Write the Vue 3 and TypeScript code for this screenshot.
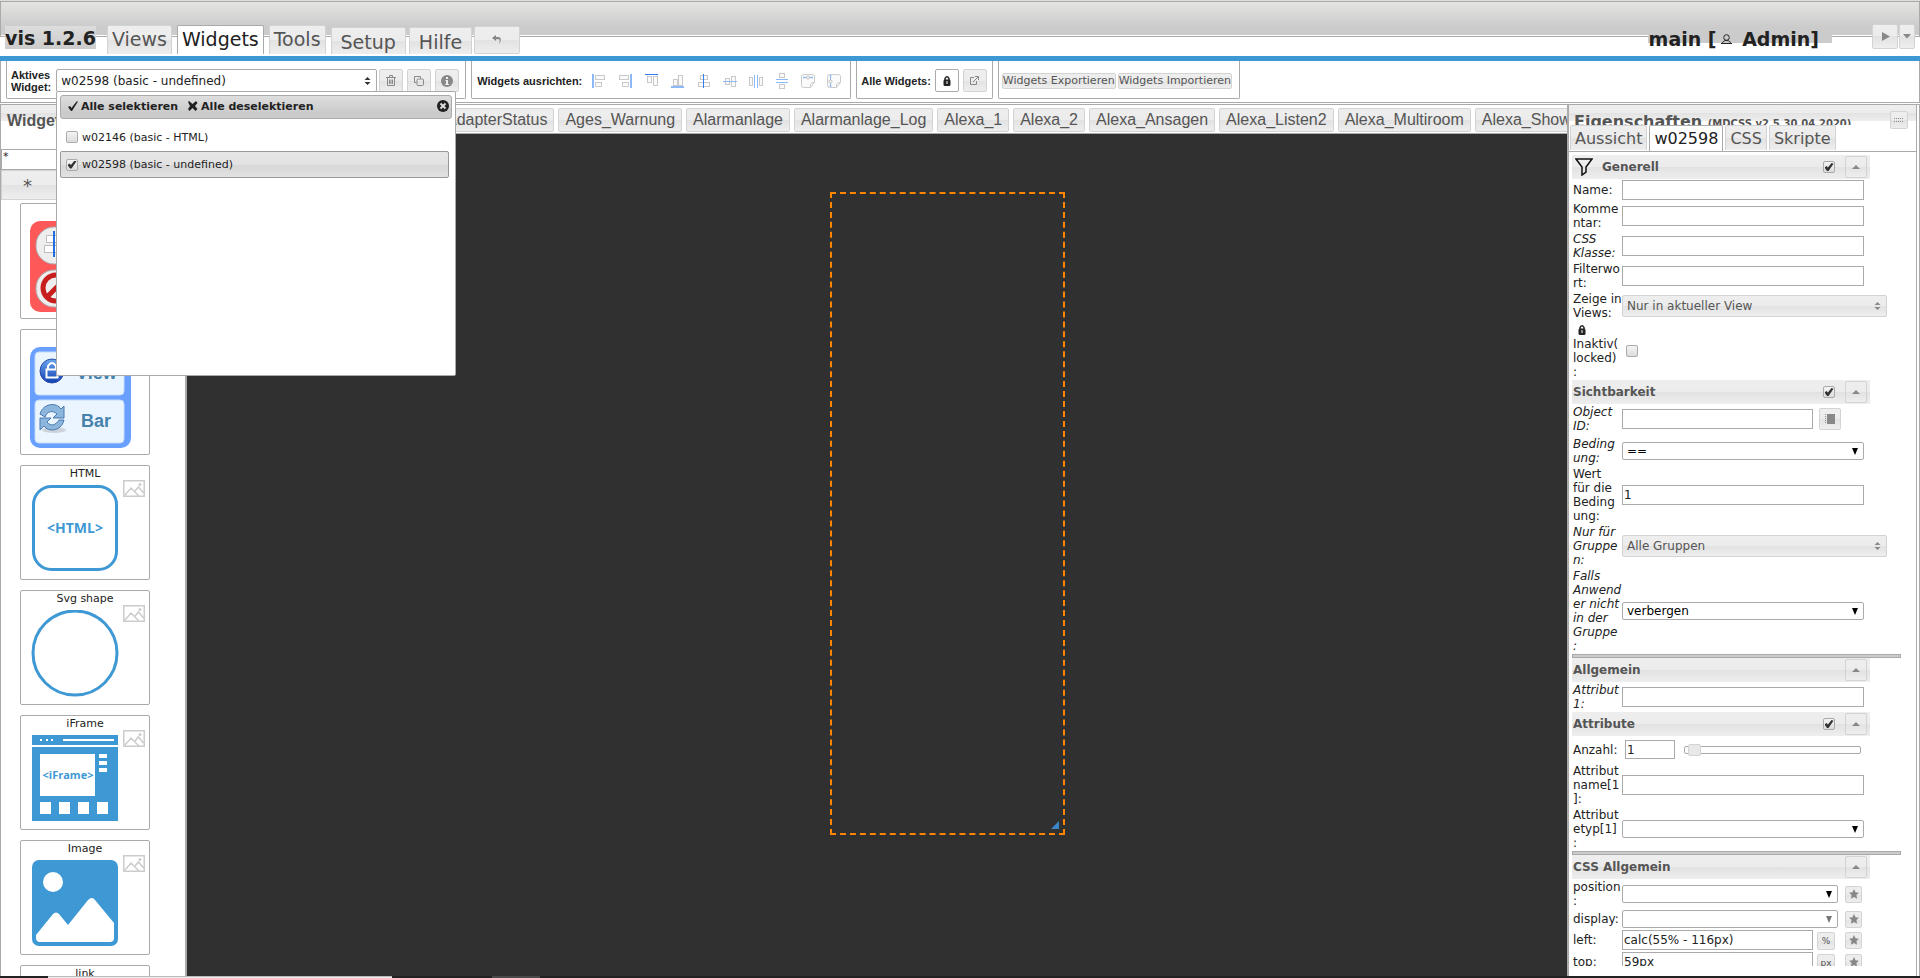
<script setup lang="ts">
import { ref } from 'vue'

interface Tab { label: string; kind: 'view' | 'plain'; active?: boolean }
type Box = [number, number, number, number, string]
interface AlignIcon { name: string; boxes: Box[] }
interface Field {
  id: string
  label: string
  type: 'text' | 'views' | 'check' | 'object' | 'select' | 'slider' | 'cssSelect' | 'cssText'
  lines: number
  italic?: boolean
  value?: string
  unit?: string
  faded?: boolean
}
interface Section { title: string; filter?: boolean; check?: boolean; divider?: boolean; fields: Field[] }

const tabs: Tab[] = [
  { label: 'Views', kind: 'view' },
  { label: 'Widgets', kind: 'view', active: true },
  { label: 'Tools', kind: 'view' },
  { label: 'Setup', kind: 'plain' },
  { label: 'Hilfe', kind: 'plain' },
]

const b = '#8ab9f7'
const d = '#2f7fee'
const g = 'none'
const alignIcons: AlignIcon[] = [
  { name: 'Links', boxes: [[0, 1, 2, 14, b], [3.5, 2.5, 9, 4, g], [3.5, 9.5, 6, 4, g]] },
  { name: 'Rechts', boxes: [[12, 1, 2, 14, b], [1.5, 2.5, 9, 4, g], [4.5, 9.5, 6, 4, g]] },
  { name: 'Oben', boxes: [[1, 1, 13, 1, d], [3.5, 3.5, 4, 6, g], [9.5, 3.5, 4, 9, g]] },
  { name: 'Unten', boxes: [[1, 13, 13, 2, b], [3.5, 6.5, 4, 6, g], [8.5, 2.5, 4, 10, g]] },
  { name: 'Mitte vertikal', boxes: [[4.5, 2.5, 7, 4, g], [2.5, 9.5, 11, 4, g], [7, 1, 1, 14, d]] },
  { name: 'Mitte horizontal', boxes: [[3.5, 5.5, 4, 6, g], [9.5, 3.5, 4, 10, g], [1, 8, 14, 1, b]] },
  { name: 'Breite verteilen', boxes: [[1.5, 4.5, 3, 8, g], [11.5, 4.5, 3, 8, g], [6, 2, 1, 13, b], [9, 2, 1, 13, b]] },
  { name: 'Höhe verteilen', boxes: [[5.5, 0.5, 5, 4, g], [5.5, 11.5, 5, 4, g], [2, 6, 12, 1, b], [2, 9, 12, 1, b]] },
]

const views = ['AdapterStatus', 'Ages_Warnung', 'Alarmanlage', 'Alarmanlage_Log', 'Alexa_1', 'Alexa_2',
  'Alexa_Ansagen', 'Alexa_Listen2', 'Alexa_Multiroom', 'Alexa_Show']

const cards = ['HTML', 'Svg shape', 'iFrame', 'Image', 'link']
const propTabs = ['Aussicht', 'w02598', 'CSS', 'Skripte']

const sections: Section[] = [
  {
    title: 'Generell', filter: true, check: true, fields: [
      { id: 'name', label: 'Name:', type: 'text', lines: 1 },
      { id: 'comment', label: 'Komme\nntar:', type: 'text', lines: 2 },
      { id: 'class', label: 'CSS\nKlasse:', type: 'text', lines: 2, italic: true },
      { id: 'filterkey', label: 'Filterwo\nrt:', type: 'text', lines: 2 },
      { id: 'views', label: 'Zeige in\nViews:', type: 'views', lines: 2, value: 'Nur in aktueller View' },
      { id: 'locked', label: 'Inaktiv(\nlocked)\n:', type: 'check', lines: 4 },
    ],
  },
  {
    title: 'Sichtbarkeit', check: true, fields: [
      { id: 'oid', label: 'Object\nID:', type: 'object', lines: 2, italic: true },
      { id: 'cond', label: 'Beding\nung:', type: 'select', lines: 2, italic: true, value: '==' },
      { id: 'val', label: 'Wert\nfür die\nBeding\nung:', type: 'text', lines: 4, value: '1' },
      { id: 'groups', label: 'Nur für\nGruppe\nn:', type: 'views', lines: 3, italic: true, value: 'Alle Gruppen' },
      { id: 'groupaction', label: 'Falls\nAnwend\ner nicht\nin der\nGruppe\n:', type: 'select', lines: 6, italic: true, value: 'verbergen' },
    ],
  },
  {
    title: 'Allgemein', divider: true, fields: [
      { id: 'attr1', label: 'Attribut\n1:', type: 'text', lines: 2, italic: true },
    ],
  },
  {
    title: 'Attribute', check: true, fields: [
      { id: 'count', label: 'Anzahl:', type: 'slider', lines: 1, value: '1' },
      { id: 'attrname', label: 'Attribut\nname[1\n]:', type: 'text', lines: 3 },
      { id: 'attrtype', label: 'Attribut\netyp[1]\n:', type: 'select', lines: 3, value: '' },
    ],
  },
  {
    title: 'CSS Allgemein', divider: true, fields: [
      { id: 'position', label: 'position\n:', type: 'cssSelect', lines: 2, value: '' },
      { id: 'display', label: 'display:', type: 'cssSelect', lines: 1, value: '', faded: true },
      { id: 'left', label: 'left:', type: 'cssText', lines: 1, value: 'calc(55% - 116px)', unit: '%' },
      { id: 'top', label: 'top:', type: 'cssText', lines: 1, value: '59px', unit: 'px' },
    ],
  },
]

const activeProp = ref('w02598')
</script>

<template>
  <div class="app">
    <header class="top">
      <h1 class="brand">vis 1.2.6</h1>
      <nav class="mainnav">
        <button v-for="t in tabs" :key="t.label" type="button" class="btn mtab" :class="[t.kind, { active: t.active }]">{{ t.label }}</button>
        <button type="button" class="btn undo" aria-label="Rückgängig">
          <svg width="10" height="10" viewBox="0 0 10 10"><path d="M4 0L0 3l4 3V4.200h2.500c1.500 0 1.500 2 .5 4.800 2.500-2.500 2.500-7-.5-7H4z" fill="#888" /></svg>
        </button>
      </nav>
      <div class="user">main [<svg width="11" height="11" viewBox="0 0 11 11"><circle cx="5.500" cy="3.500" r="2.800" fill="none" stroke="#222" /><path d="M1.500 9.500c0-2 1.500-3 4-3s4 1 4 3zM0 9.500h11" fill="none" stroke="#222" /></svg> Admin]</div>
      <div class="run">
        <button type="button" class="btn play" aria-label="Start"><svg width="9" height="9" viewBox="0 0 9 9"><path d="M1 0l8 4.500L1 9z" fill="#888" /></svg></button>
        <button type="button" class="btn more" aria-label="Mehr"><svg width="8" height="5" viewBox="0 0 8 5"><path d="M0 0h8L4 4.500z" fill="#888" /></svg></button>
      </div>
    </header>

    <div class="toolbar">
      <div class="group active-widget">
        <label class="cap" for="widget">Aktives<br>Widget:</label>
        <div class="sel main-sel">
          <select id="widget"><option>w02598 (basic - undefined)</option></select>
          <svg width="7" height="8" viewBox="0 0 7 8"><path d="M.5 3h6l-3-3zM.5 5h6l-3 3z" fill="#333" /></svg>
        </div>
        <button type="button" class="btn sq" aria-label="Löschen"><svg width="10" height="11" viewBox="0 0 10 11"><path d="M0 2.500h10M3.500 2V.5h3V2M1.500 3v7.500h7V3M3.500 4.500V9M5 4.500V9M6.500 4.500V9" fill="none" stroke="#888" /></svg></button>
        <button type="button" class="btn sq" aria-label="Kopieren"><svg width="10" height="10" viewBox="0 0 10 10"><path d="M2.500 6.500h-2v-6h6v2" fill="none" stroke="#888" /><rect x="3" y="3" width="6.500" height="6.500" rx="1" fill="none" stroke="#888" /></svg></button>
        <button type="button" class="btn sq" aria-label="Info"><svg width="12" height="12" viewBox="0 0 12 12"><circle cx="6" cy="6" r="6" fill="#888" /><path d="M5 2h2v2H5zM4.500 5H7v4h1v1H4.200V9H5V6h-.5z" fill="#eee" /></svg></button>

        <div class="popover">
          <div class="pop-head">
            <button type="button"><svg width="10" height="10" viewBox="0 0 10 10"><path d="M0 6l2-1 1.500 2L8.500.5H10L4 10H3z" fill="#222" /></svg>Alle selektieren</button>
            <button type="button"><svg width="10" height="10" viewBox="0 0 10 10"><path d="M1 0l3.500 3L8 0l1.500 2L7 5l2.500 3-2 2-3-3-3 3L0 8l2-3L0 1z" fill="#222" /></svg>Alle deselektieren</button>
            <button type="button" class="close" aria-label="Schließen"><svg width="12" height="12" viewBox="0 0 12 12"><circle cx="6" cy="6" r="6" fill="#222" /><path d="M3.500 3.500l5 5M8.500 3.500l-5 5" stroke="#ddd" stroke-width="2" /></svg></button>
          </div>
          <label class="opt"><input type="checkbox">w02146 (basic - HTML)</label>
          <label class="opt on"><input type="checkbox" checked>w02598 (basic - undefined)</label>
        </div>
      </div>

      <div class="group align">
        <span class="cap">Widgets ausrichten:</span>
        <button v-for="a in alignIcons" :key="a.name" type="button" class="bare" :aria-label="a.name">
          <svg width="16" height="16" viewBox="0 0 16 16">
            <rect v-for="(r, i) in a.boxes" :key="i" :x="r[0]" :y="r[1]" :width="r[2]" :height="r[3]" :fill="r[4] === 'none' ? '#fafafa' : r[4]" :stroke="r[4] === 'none' ? '#c9c9c9' : 'none'" />
          </svg>
        </button>
        <button type="button" class="bare" aria-label="Gleiche Breite">
          <svg width="16" height="16" viewBox="0 0 16 16"><path d="M3.500 1.500h9q2 0 2 2v6l-4 5h-7q-2 0-2-2v-9q0-2 2-2zM10.500 14.500v-3q0-2 4-2" fill="#fafafa" stroke="#ccc" /><path d="M3 4.500h10M4 3.500v2M12 3.500v2" stroke="#8ab9f7" /><circle cx="8" cy="4.500" r="1.500" fill="#fff" stroke="#bbb" /></svg>
        </button>
        <button type="button" class="bare" aria-label="Gleiche Höhe">
          <svg width="16" height="16" viewBox="0 0 16 16"><path d="M3.500 1.500h9q2 0 2 2v6l-4 5h-7q-2 0-2-2v-9q0-2 2-2zM10.500 14.500v-3q0-2 4-2" fill="#fafafa" stroke="#ccc" /><path d="M4.500 2v12M3.500 3h2M3.500 13h2" stroke="#8ab9f7" /><circle cx="4.500" cy="8.500" r="1.500" fill="#fff" stroke="#bbb" /></svg>
        </button>
      </div>

      <div class="group all">
        <span class="cap">Alle Widgets:</span>
        <button type="button" class="btn sq white" aria-label="Sperren"><svg width="8" height="10" viewBox="0 0 8 10"><path d="M2 4V2.500Q4-1 6 2.500V4" fill="none" stroke="#222" stroke-width="1.500" /><rect x=".5" y="3.500" width="7" height="6.500" rx="1.500" fill="#222" /><path d="M3.500 5h1v3h-1z" fill="#fff" /></svg></button>
        <button type="button" class="btn sq" aria-label="Öffnen"><svg width="9" height="9" viewBox="0 0 9 9"><path d="M4 1.500H.5v7h6V5M3 6l5-5M5 .5h3.500V4" fill="none" stroke="#888" /></svg></button>
      </div>

      <div class="group io">
        <button type="button" class="btn small">Widgets Exportieren</button>
        <button type="button" class="btn small">Widgets Importieren</button>
      </div>
    </div>

    <div class="work">
      <aside class="palette">
        <h2>Widgets</h2>
        <input class="filter" type="text" value="*" aria-label="Filter">
        <button type="button" class="btn set">*</button>
        <div class="cards">
          <div class="card first">
            <svg width="100" height="91" viewBox="0 0 100 91">
              <rect width="100" height="91" rx="10" fill="#ff5858" />
              <rect x="6" y="6" width="40" height="37" rx="18" fill="#eee" stroke="#aaa" /><rect x="6" y="49" width="40" height="37" rx="18" fill="#eee" stroke="#aaa" />
              <path d="M16.500 14.500h14v7h-14zM14.500 24.500h18v7h-18z" fill="#fff" stroke="#bbb" /><path d="M23 10h2v26h-2z" fill="#1f6fe0" />
              <circle cx="26" cy="67" r="13" fill="#eee" stroke="#c81e1e" stroke-width="5" /><path d="M17 76l18-18" stroke="#c81e1e" stroke-width="5" />
            </svg>
          </div>
          <div class="card second">
            <svg width="101" height="101" viewBox="0 0 101 101">
              <defs><linearGradient id="ball" x2="0" y2="1"><stop stop-color="#6ea8ee" /><stop offset="1" stop-color="#0f3fb4" /></linearGradient></defs>
              <rect width="101" height="101" rx="10" fill="#69a0ff" />
              <rect x="5" y="5" width="89" height="43" rx="4" fill="#ebf5ff" stroke="#c4dcf7" /><rect x="5" y="53" width="89" height="43" rx="4" fill="#ebf5ff" stroke="#c4dcf7" />
              <circle cx="22" cy="24" r="12" fill="url(#ball)" stroke="#2d4da8" />
              <path d="M18 22v-3q4-6 8 0v3M16.500 22.500h11v8h-11z" fill="none" stroke="#fff" stroke-width="2" />
              <ellipse cx="24" cy="83" rx="12" ry="3" fill="#ccd3da" />
              <path d="M10 67c3-11 17-12 21-5l3-3v12H23l4-4c-4-4-10-3-12 3z" fill="#8db6dc" stroke="#4878ae" /><path d="M34 73c-3 12-16 12-20 6l-4 4V71h11l-4 4c4 5 9 3 12-2z" fill="#8db6dc" stroke="#4878ae" />
              <text x="46" y="32" class="ico-text">View</text><text x="51" y="80" class="ico-text">Bar</text>
            </svg>
          </div>
          <div v-for="c in cards" :key="c" class="card">
            <span class="card-title">{{ c }}</span>
            <div class="card-body">
              <svg width="88" height="88" viewBox="0 0 88 88">
                <template v-if="c === 'HTML'">
                  <rect x="2.500" y="1.500" width="83" height="83" rx="18" fill="#fff" stroke="#3d98d4" stroke-width="3" />
                  <text x="44" y="48" text-anchor="middle" class="tag html">&lt;HTML&gt;</text>
                </template>
                <circle v-else-if="c === 'Svg shape'" cx="44" cy="43" r="42" fill="#fff" stroke="#3d98d4" stroke-width="3" />
                <template v-else-if="c === 'iFrame'">
                  <path d="M1 0h86v10H1zM1 12h86v74H1z" fill="#3d98d4" />
                  <path d="M9 4h2v2H9zM15 4h2v2h-2zM20 4h2v2h-2zM32 4h51v2H32zM9 19h55v42H9zM68 19h8v4h-8zM68 26h8v4h-8zM68 33h8v4h-8zM9 67h11v12H9zM28 67h11v12H28zM47 67h11v12H47zM66 67h11v12H66z" fill="#fff" />
                  <text x="37" y="44" text-anchor="middle" class="tag">&lt;iFrame&gt;</text>
                </template>
                <template v-else-if="c === 'Image'">
                  <rect x="1" width="86" height="86" rx="7" fill="#3d98d4" /><circle cx="22" cy="22" r="10" fill="#fff" />
                  <path d="M5 75L22 54q3-3 6 0l9 11 20-25q4-4 7 0l19 23v15q0 4-4 4H9q-4 0-4-4z" fill="#fff" />
                </template>
              </svg>
              <svg class="thumb" width="22" height="17" viewBox="0 0 22 17"><path d="M.75.75h20.500v15.500H.75zM2 15l6-7 8 8M12 11l3.500-4 5 6" fill="none" stroke="#ccc" stroke-width="1.500" /><circle cx="17" cy="4.500" r="1.500" fill="#ccc" /></svg>
            </div>
          </div>
        </div>
      </aside>

      <main class="center">
        <nav class="views">
          <button v-for="v in views" :key="v" type="button" class="btn vtab">{{ v }}</button>
        </nav>
        <div class="canvas">
          <div class="widget"><svg width="8" height="8" viewBox="0 0 8 8"><path d="M8 0v8H0z" fill="#3d86c6" /></svg></div>
        </div>
      </main>

      <aside class="props">
        <div class="p-head">
          <h2>Eigenschaften <small>(MDCSS v2.5.30.04.2020)</small></h2>
          <button type="button" class="btn grip" aria-label="Optionen"><svg width="10" height="4" viewBox="0 0 10 4"><path d="M0 .5h10M0 3.500h10" stroke="#888" stroke-dasharray="1 1" /></svg></button>
        </div>
        <div class="p-tabs">
          <button v-for="p in propTabs" :key="p" type="button" class="btn ptab" :class="{ active: p === activeProp }" @click="activeProp = p">{{ p }}</button>
        </div>
        <div class="p-body">
          <template v-for="s in sections" :key="s.title">
            <div v-if="s.divider" class="divider"></div>
            <div class="sec">
              <svg v-if="s.filter" class="funnel" width="18" height="18" viewBox="0 0 18 18"><path d="M1 1h16l-6 8v5l-4 3V9z" fill="none" stroke="#111" stroke-width="1.500" /></svg>
              <h3>{{ s.title }}</h3>
              <input v-if="s.check" type="checkbox" checked :aria-label="s.title">
              <button type="button" class="btn fold" :aria-label="s.title + ' einklappen'"><svg width="8" height="4" viewBox="0 0 8 4"><path d="M0 4h8L4 0z" fill="#888" /></svg></button>
            </div>
            <div v-for="f in s.fields" :key="f.id" class="row" :class="['t-' + f.type, 'l' + f.lines]">
              <label :for="f.id" :class="{ it: f.italic }">
                <svg v-if="f.id === 'locked'" class="lock" width="8" height="10" viewBox="0 0 8 10"><path d="M2 4V2.500Q4-1 6 2.500V4" fill="none" stroke="#222" stroke-width="1.500" /><rect x=".5" y="3.500" width="7" height="6.500" rx="1.500" fill="#222" /><path d="M3.500 5h1v3h-1z" fill="#fff" /></svg>{{ f.label }}</label>
              <input v-if="f.type === 'text'" :id="f.id" class="inp" type="text" :value="f.value">
              <div v-else-if="f.type === 'views'" class="sel soft">
                <select :id="f.id"><option>{{ f.value }}</option></select>
                <svg width="7" height="8" viewBox="0 0 7 8"><path d="M.5 3h6l-3-3zM.5 5h6l-3 3z" fill="#888" /></svg>
              </div>
              <input v-else-if="f.type === 'check'" :id="f.id" type="checkbox">
              <template v-else-if="f.type === 'object'">
                <input :id="f.id" class="inp mid" type="text">
                <button type="button" class="btn pick" aria-label="Objekt wählen"><svg width="10" height="10" viewBox="0 0 10 10"><path d="M2 0h8v10H2zM0 0h1v1H0zM0 2h1v1H0zM0 4h1v1H0zM0 6h1v1H0zM0 8h1v1H0z" fill="#888" /></svg></button>
              </template>
              <div v-else-if="f.type === 'select' || f.type === 'cssSelect'" class="sel combo" :class="{ faded: f.faded }">
                <select :id="f.id"><option>{{ f.value }}</option></select>
                <svg width="6" height="7" viewBox="0 0 6 7"><path d="M0 0h6L3 7z" fill="currentColor" /></svg>
              </div>
              <template v-else-if="f.type === 'slider'">
                <input :id="f.id" class="inp num" type="text" :value="f.value">
                <input class="range" type="range" min="0" max="20" value="0" aria-label="Anzahl">
              </template>
              <template v-else>
                <input :id="f.id" class="inp mid" type="text" :value="f.value">
                <button type="button" class="btn unit">{{ f.unit }}</button>
              </template>
              <button v-if="f.type === 'cssSelect' || f.type === 'cssText'" type="button" class="btn star" aria-label="Favorit"><svg width="10" height="10" viewBox="0 0 10 10"><path d="M5 0l1.500 3.300 3.500.4-2.600 2.400.7 3.700L5 8 1.900 9.800l.7-3.700L0 3.700l3.500-.4z" fill="#888" /></svg></button>
            </div>
          </template>
        </div>
      </aside>
    </div>
    <footer class="status"><span></span><i></i></footer>
  </div>
</template>

<style>
body { overflow: hidden; background: #fff; }
</style>

<style scoped>
* { box-sizing: border-box; }
.app { display: flex; flex-direction: column; height: 100vh; overflow: hidden; font-family: "DejaVu Sans", Verdana, sans-serif; font-size: 12px; color: #222; background: #fff; }
button, input, select { font: inherit; color: inherit; margin: 0; padding: 0; }
button { background: none; border: 0; flex: none; display: flex; align-items: center; justify-content: center; white-space: nowrap; }
svg { display: block; flex: none; }
h1, h2, h3 { margin: 0; }
.btn { border: 1px solid #d3d3d3; border-radius: 2px; color: #555; background: linear-gradient(#eee, #ececec 50%, #e2e2e2 50%, #eee); }
.btn.active { background: #fff; border-color: #aaa; color: #212121; }

input[type="checkbox"] { appearance: none; flex: none; width: 12px; height: 12px; border: 1px solid #aaa; border-radius: 2px; background: linear-gradient(#f4f4f4, #dcdcdc); display: grid; place-items: center; }
input[type="checkbox"]:checked::before { content: ""; width: 9px; height: 8px; background: #333; clip-path: polygon(0 55%, 22% 38%, 38% 56%, 78% 0, 100% 10%, 45% 100%, 28% 100%); }

.top { flex: none; display: flex; align-items: flex-end; height: 61px; padding: 0 5px; border-bottom: 5px solid #3c97d3; background: linear-gradient(#e4e4e2, #cbcbcb 75%) 0 1px / 100% 33px no-repeat; position: relative; border-top: 1px solid #ddd; }
.top::before { content: ""; position: absolute; inset: 0 0 auto; height: 34px; border: 1px solid #aaa; }
.top > * { position: relative; }
.brand { font-size: 19px; line-height: 23px; margin-bottom: 7px; padding-top: 1px; height: 23px; background: linear-gradient(#ddd, #cbcbcb); color: #222; }
.mainnav { display: flex; align-items: flex-end; gap: 4px; margin: 0 auto 2px 11px; }
.mtab { font-size: 19px; border-bottom: 0; border-radius: 2px 2px 0 0; padding: 0 4px 3px; height: 29px; margin-right: 1px; }
.mtab.plain { height: 27px; padding: 1px 9px 0; margin-right: -1px; }
.undo { width: 46px; height: 28px; margin-left: -1px; }
.user { align-self: flex-start; margin: 26px 40px 0 0; height: 16px; padding: 9px 13px 0 1px; background: #cbcbcb; font-size: 19px; line-height: 23px; font-weight: bold; display: flex; align-items: center; white-space: pre; }
.user svg { margin: 0 4px; }
.run { display: flex; gap: 1px; margin-bottom: 7px; }
.play { width: 26px; height: 25px; }
.more { width: 16px; height: 25px; }

.toolbar { flex: none; display: flex; gap: 5px; height: 42px; padding: 0 5px 3px; border: solid #aaa; border-width: 0 1px 1px; }
.group { position: relative; display: flex; align-items: center; gap: 4px; border: 1px solid #aaa; border-top: 0; border-radius: 0 0 2px 2px; padding: 2px 6px 0 4px; }
.cap { font: bold 11px/12px "Liberation Sans", Arial, sans-serif; white-space: nowrap; }
.sel { display: grid; flex: none; align-items: center; }
.sel > * { grid-area: 1 / 1; }
.sel select { appearance: none; width: 100%; height: 100%; border: 1px solid #aaa; border-radius: 2px; background: #fff; padding: 0 4px; outline: 0; }
.sel svg { justify-self: end; margin-right: 6px; pointer-events: none; }
.main-sel { width: 321px; height: 23px; margin-right: -2px; margin-left: 1px; }
.main-sel select { color: #222; }
.sq { width: 24px; height: 23px; }
.sq.white { background: #fff; border-color: #aaa; }
.align { gap: 10px; padding: 2px 8px 0 5px; }
.all { padding: 2px 5px 0 4px; }
.io { gap: 2px; padding: 2px 7px 0 3px; }
.small { font-size: 11px; line-height: 14px; height: 16px; }

.popover { position: absolute; z-index: 5; left: 49px; top: 30px; width: 400px; height: 285px; padding: 3px; background: #fff; border: 1px solid #aaa; border-radius: 2px; }
.pop-head { display: flex; align-items: center; gap: 10px; height: 24px; padding: 0 2px 2px 7px; border: 1px solid #aaa; border-radius: 3px; background: linear-gradient(#dedede, #cbcbcb 75%); margin-bottom: 6px; }
.pop-head button { gap: 3px; font-size: 11px; font-weight: bold; color: #222; }
.pop-head .close { margin-left: auto; }
.opt { display: flex; align-items: center; gap: 4px; height: 26px; margin-right: 3px; padding: 0 0 2px 5px; font-size: 11px; border: 1px solid transparent; border-radius: 2px; }
.opt.on { background: linear-gradient(#e6e6e6, #e2e2e2 50%, #d6d6d6 50%, #e2e2e2); border-color: #999; padding-bottom: 0; height: 27px; }

.work { flex: 1; min-height: 0; display: flex; margin-top: 1px; }
.palette { flex: none; width: 187px; border: solid #aaa; border-width: 1px 2px 0 1px; display: flex; flex-direction: column; overflow: hidden; }
.palette h2 { flex: none; height: 44px; padding: 8px 0 0 6px; font: bold 16px/16px "Liberation Sans", Arial, sans-serif; color: #555; background: linear-gradient(#eee, #ececec 50%, #e2e2e2 50%, #eee) 0 0 / 100% 16px no-repeat; }
.filter { flex: none; height: 21px; border: 1px solid #aaa; padding: 0 1px 6px; font-size: 11px; outline: 0; }
.set { height: 30px; justify-content: flex-start; padding-left: 21px; font-size: 18px; border-radius: 0; }
.cards { display: flex; flex-direction: column; gap: 10px; padding: 3px 0 0 19px; }
.card { flex: none; width: 130px; height: 115px; border: 1px solid #aaa; border-radius: 2px; display: flex; flex-direction: column; }
.card.first { padding: 17px 0 0 9px; height: 116px; }
.card.second { height: 126px; padding: 17px 0 0 9px; }
.card-title { text-align: center; font-size: 11px; line-height: 15px; height: 19px; }
.card-body { display: flex; gap: 4px; padding-left: 10px; }
.thumb { margin-top: -5px; }
.ico-text { font: bold 18px "Liberation Sans", Arial, sans-serif; fill: #4682ac; }
.tag { font: bold 11px "Open Sans", sans-serif; fill: #3d98d4; }
.tag.html { font-size: 14px; }

.center { flex: 1; min-width: 0; display: flex; flex-direction: column; }
.views { flex: none; display: flex; gap: 4px; height: 30px; padding: 3px 0 2px 252px; border: solid #aaa; border-width: 1px 0; overflow: hidden; }
.vtab { height: 24px; padding: 0 6px; font: 16px/20px "Liberation Sans", Arial, sans-serif; }
.canvas { flex: 1; position: relative; background: #303030; }
.widget { position: absolute; left: calc(55% - 116px); top: 58px; width: 235px; height: 643px; border: 2px dashed #ff8400; display: flex; align-items: flex-end; justify-content: flex-end; padding: 4px; }

.props { flex: none; width: 353px; display: flex; flex-direction: column; border: solid #aaa; border-width: 1px 1px 0 2px; box-shadow: inset -2px 0 #fff, inset -3px 0 #aaa; padding-right: 3px; }
.p-head { flex: none; height: 20px; display: flex; background: linear-gradient(#eee, #ececec 50%, #e2e2e2 50%, #eee) 0 0 / 100% 16px no-repeat; }
.p-head h2 { flex: 1; height: 20px; overflow: hidden; padding: 7px 0 0 5px; font-size: 16px; line-height: 20px; color: #555; white-space: nowrap; }
.p-head small { font-size: 10px; }
.grip { width: 18px; height: 18px; margin: 6px 8px 0 0; }
.p-tabs { flex: none; display: flex; gap: 2px; height: 27px; padding: 0 0 1px 1px; border-bottom: 1px solid #aaa; }
.ptab { font-size: 16px; height: 25px; padding: 0 4px; border-bottom: 0; border-radius: 2px 2px 0 0; }
.ptab.active { height: 26px; }
.p-body { flex: 1; min-height: 0; margin: 3px 0 10px 3px; overflow: hidden; line-height: 14px; }
.divider { height: 4px; margin-right: 15px; border: 1px solid #aaa; background: #ccc; }
.sec { display: flex; align-items: center; height: 24px; width: 298px; padding: 0 3px 0 1px; color: #555; background: linear-gradient(#eee, #ececec 50%, #e2e2e2 50%, #eee); }
.sec h3 { flex: 1; font-size: 12px; line-height: 14px; }
.funnel { margin: 0 9px 0 2px; }
.fold { width: 22px; height: 22px; margin-left: 10px; }
.row { display: flex; align-items: center; height: 30px; }
.row.l1 { height: 22px; }
.row.l3 { height: 44px; }
.row.l4 { height: 58px; }
.row.l6 { height: 86px; }
.row.t-check { height: 59px; }
.row.t-object { height: 32px; padding-bottom: 2px; }
.row.t-slider { height: 27px; }
.row.t-cssSelect.l1 { height: 20px; }
.row label { flex: none; width: 50px; padding-left: 1px; white-space: pre; line-height: 14px; }
.row .it { font-style: italic; }
.lock { margin: 2px 0 2px 5px; }
.inp { width: 242px; height: 20px; border: 1px solid #aaa; background: #fff; padding: 0 1px; color: #222; outline: 0; }
.inp.mid { width: 191px; }
.inp.num { width: 50px; height: 19px; margin-left: 3px; }
.row input[type="checkbox"] { margin-left: 4px; }
.soft { width: 265px; height: 22px; }
.soft select { border-color: #d3d3d3; color: #555; background: linear-gradient(#eee, #ececec 50%, #e2e2e2 50%, #eee); }
.combo { width: 242px; height: 18px; color: #000; }
.combo.faded { color: #777; }
.t-cssSelect .combo { width: 216px; }
.pick { width: 22px; height: 22px; margin-left: 6px; }
.unit { width: 18px; height: 18px; margin: 2px 0 0 4px; font-size: 9px; }
.star { width: 17px; height: 17px; margin-left: 7px; }
.t-cssText .star { margin-left: 10px; }
.range { appearance: none; width: 177px; height: 8px; margin-left: 9px; border: 1px solid #aaa; border-radius: 2px; background: #fff; padding: 0 3px; }
.range::-webkit-slider-thumb { appearance: none; width: 13px; height: 12px; border: 1px solid #d3d3d3; border-radius: 2px; background: #e8e8e8; }

.status { flex: none; display: flex; height: 2px; background: #222; }
.status span { width: 344px; margin-left: 48px; background: #eee; border-top: 1px solid #bbb; }
.status i { width: 48px; margin-left: 100px; background: #4a4a4a; }
</style>
